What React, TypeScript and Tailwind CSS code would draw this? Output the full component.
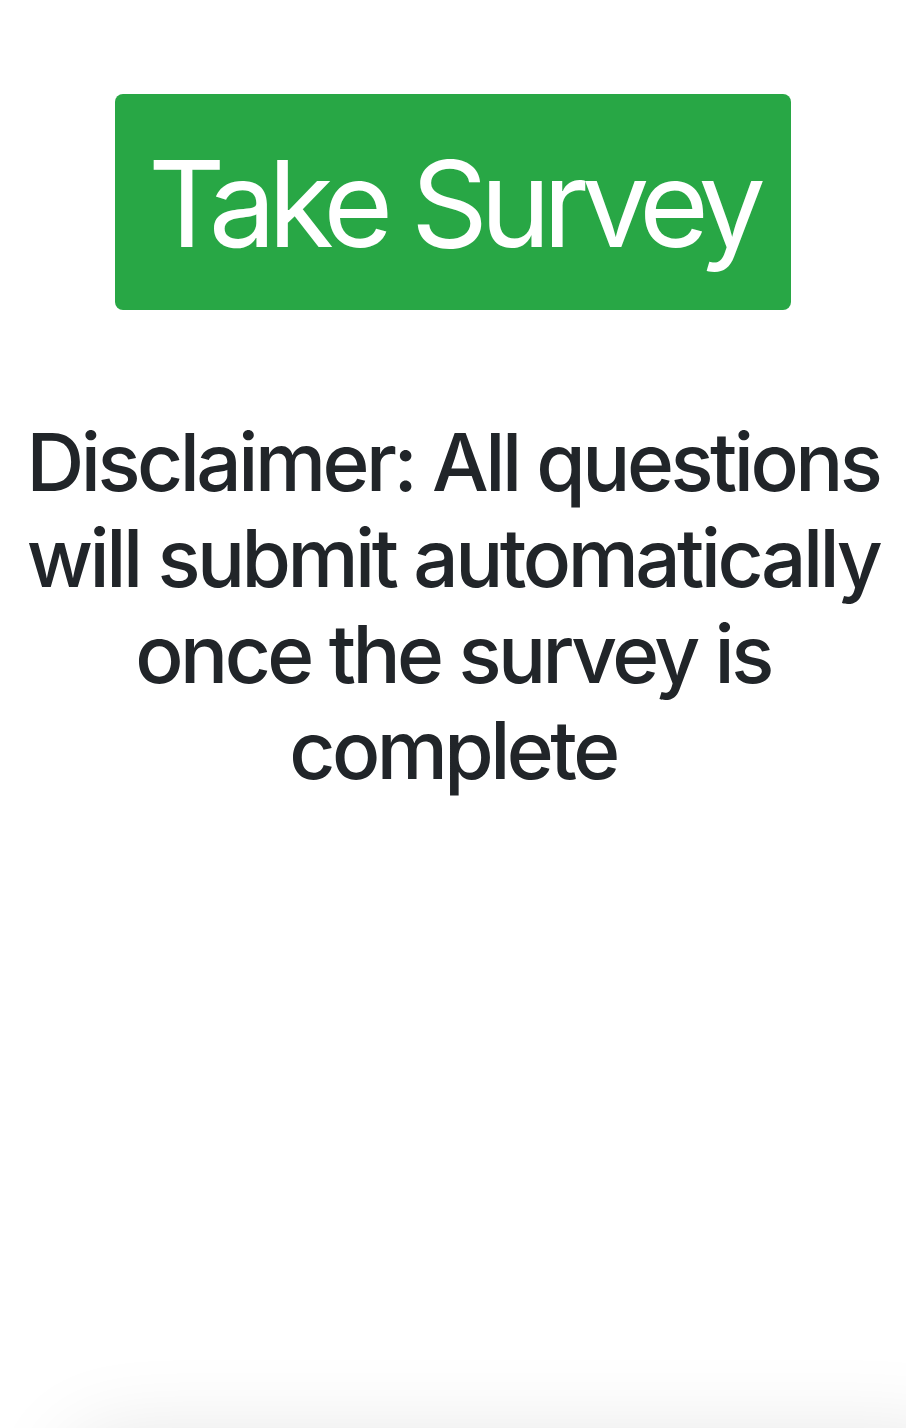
export default function App() {
    return (
        <main className="relative w-full min-h-[1428px] bg-white overflow-hidden font-['Inter','Helvetica_Neue',Arial,sans-serif] text-[#212529]">
            <div className="flex flex-col items-center pt-[94px] px-2">
                <button className="w-[676px] h-[216px] bg-[#28a745] text-white rounded-[8px] text-[120px] leading-none tracking-[-8px] whitespace-nowrap flex items-center justify-center pt-[4px]">
                    Take Survey
                </button>

                <h2 className="mt-[104px] text-center text-[80px] leading-[96px] font-medium tracking-[-3.5px] max-w-[890px]">
                    Disclaimer: All questions will submit automatically once the survey is complete
                </h2>
            </div>

            <div className="absolute left-[70px] -right-[60px] top-[1440px] h-[120px] rounded-[40px] bg-white shadow-[0_0_90px_rgba(0,0,0,0.12)]" />
        </main>
    )
}
